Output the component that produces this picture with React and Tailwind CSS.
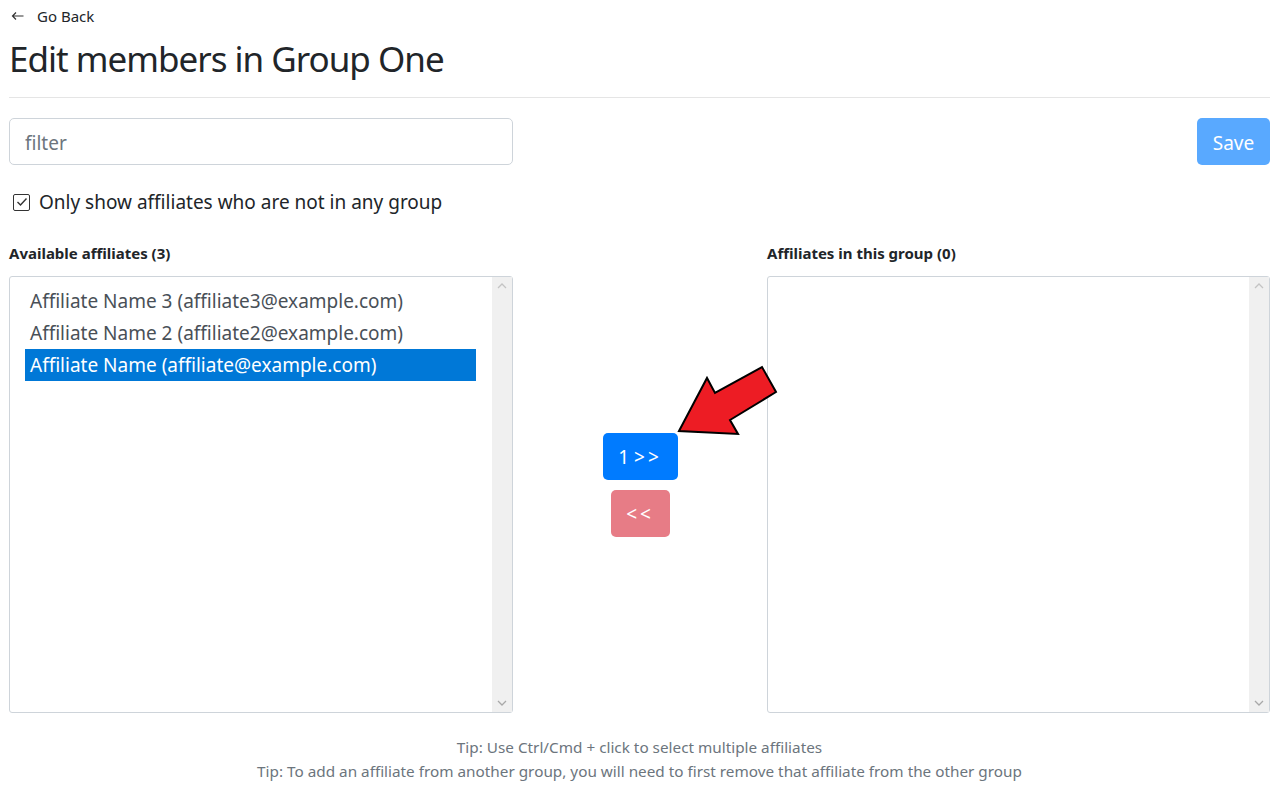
import React from 'react';

const affiliates = [
  { name: 'Affiliate Name 3', email: 'affiliate3@example.com' },
  { name: 'Affiliate Name 2', email: 'affiliate2@example.com' },
  { name: 'Affiliate Name', email: 'affiliate@example.com', selected: true },
];

function FakeScrollbar() {
  return (
    <div className="w-[20px] bg-[#f0f0f0] flex flex-col justify-between items-center py-[6px]">
      <svg width="10" height="6" viewBox="0 0 10 6">
        <path d="M1 5 L5 1 L9 5" fill="none" stroke="#c4c4c4" strokeWidth="1.3" />
      </svg>
      <svg width="10" height="6" viewBox="0 0 10 6">
        <path d="M1 1 L5 5 L9 1" fill="none" stroke="#a8a8a8" strokeWidth="1.3" />
      </svg>
    </div>
  );
}

function ListBox({ items }) {
  return (
    <div className="h-[437px] border border-[#ced4da] rounded-[3px] flex bg-white">
      <div className="flex-1 pl-[15px] pr-[16px] pt-[8px]">
        {items.map((a) => (
          <div
            key={a.email}
            className={`h-[32px] flex items-center pt-[1px] px-[5px] text-[19px] ${
              a.selected ? 'bg-[#0078d7] text-white' : 'text-[#495057]'
            }`}
          >
            {a.name} ({a.email})
          </div>
        ))}
      </div>
      <FakeScrollbar />
    </div>
  );
}

export default function App() {
  return (
    <div
      className="w-[1278px] h-[787px] bg-white text-[#212529] pl-[9px] pr-[8px] overflow-hidden"
      style={{ fontFamily: '"Noto Sans", "Open Sans", sans-serif' }}
    >
      {/* Back link */}
      <div className="h-[32px] flex items-center text-[15px] text-[#212529]">
        <svg className="ml-[2px] mr-[13px]" width="13" height="10" viewBox="0 0 13 10">
          <path d="M12.5 5 H1.5 M5 1.5 L1.5 5 L5 8.5" fill="none" stroke="#333" strokeWidth="1.2" />
        </svg>
        <span>Go Back</span>
      </div>

      <h2 className="text-[35px] leading-[48px] mt-[3px] tracking-[-1px]">Edit members in Group One</h2>
      <hr className="mt-[14px] border-0 border-t border-[#e5e5e5]" />

      {/* Filter + save */}
      <div className="mt-[20px] flex justify-between">
        <input
          className="w-[504px] h-[47px] border border-[#ced4da] rounded-[5px] px-[15px] pt-[3px] text-[19px] placeholder-[#6c757d] outline-none"
          placeholder="filter"
        />
        <button className="h-[47px] w-[73px] rounded-[5px] bg-[#59a9ff] text-white text-[19px] pt-[3px]">
          Save
        </button>
      </div>

      <div className="mt-[22px] h-[30px] flex items-center text-[19px]">
        <span className="ml-[4px] w-[17px] h-[17px] border border-[#333] rounded-[2px] flex items-center justify-center mr-[9px]">
          <svg width="12" height="10" viewBox="0 0 12 10">
            <path d="M1.5 5 L4.5 8 L10.5 1.5" fill="none" stroke="#333" strokeWidth="1.4" />
          </svg>
        </span>
        <span>Only show affiliates who are not in any group</span>
      </div>

      {/* Lists */}
      <div className="mt-[24px] flex">
        <div className="w-[504px]">
          <div className="h-[24px] leading-[24px] text-[15px] font-bold mb-[11px]">Available affiliates (3)</div>
          <ListBox items={affiliates} />
        </div>

        <div className="w-[254px] relative flex flex-col items-center pt-[192px] gap-[10px]">
          <button className="w-[75px] h-[47px] rounded-[5px] bg-[#007bff] text-white text-[19px] pt-[2px]">
            1 <span className="tracking-[3px]">&gt;&gt;</span>
          </button>
          <button className="w-[59px] h-[47px] rounded-[5px] bg-[#e77c86] text-white text-[19px] pt-[2px] tracking-[3px]">
            &lt;&lt;
          </button>
          <svg className="absolute left-0 top-0" width="280" height="200" viewBox="513 241 280 200">
            <polygon
              points="679,431 707,378 715,393 762,367 776,392 730,420 738,434"
              fill="#ed1c24"
              stroke="#000"
              strokeWidth="2"
              strokeLinejoin="miter"
            />
          </svg>
        </div>

        <div className="w-[503px]">
          <div className="h-[24px] leading-[24px] text-[15px] font-bold mb-[11px]">Affiliates in this group (0)</div>
          <ListBox items={[]} />
        </div>
      </div>

      <div className="mt-[22px] text-center text-[15.3px] leading-[24px] text-[#6c757d]">
        <div>Tip: Use Ctrl/Cmd + click to select multiple affiliates</div>
        <div>Tip: To add an affiliate from another group, you will need to first remove that affiliate from the other group</div>
      </div>
    </div>
  );
}
